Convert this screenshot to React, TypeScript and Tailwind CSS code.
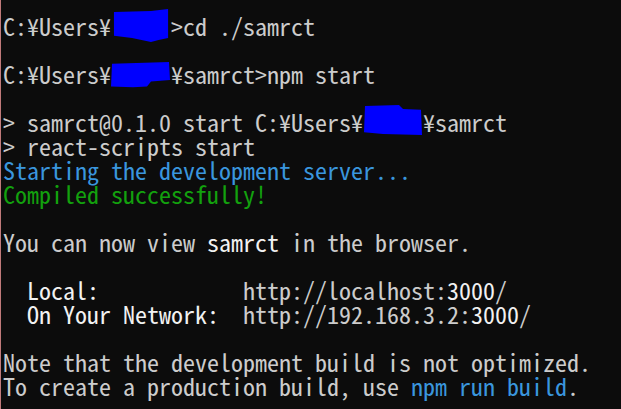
const W = 'text-[#f2f2f2]';

function Blot({ className, d }: { className: string; d: string }) {
  return (
    <svg className={`absolute ${className}`} viewBox="0 0 60 32" preserveAspectRatio="none">
      <path d={d} fill="#0000ff" />
    </svg>
  );
}

export default function App() {
  return (
    <div className="relative w-[621px] h-[409px] overflow-hidden bg-[#0c0c0c] border-l border-[#c07a7a]">
      <div
        className="pt-[14px] pl-[2px] whitespace-pre text-[24px] leading-[24px] text-[#cccccc]"
        style={{ fontFamily: '"Noto Sans Mono CJK JP", "Liberation Mono", monospace' }}
      >
        <div>C:¥Users¥     &gt;cd ./samrct</div>
        <div>&nbsp;</div>
        <div>C:¥Users¥     ¥samrct&gt;npm start</div>
        <div>&nbsp;</div>
        <div>&gt; samrct@0.1.0 start C:¥Users¥     ¥samrct</div>
        <div>&gt; react-scripts start</div>
        <div className="text-[#3a96dd]">Starting the development server...</div>
        <div className="text-[#13a10e]">Compiled successfully!</div>
        <div>&nbsp;</div>
        <div>
          You can now view <span className={W}>samrct</span> in the browser.
        </div>
        <div>&nbsp;</div>
        <div>
          {'  '}<span className={W}>Local:</span>{'            '}http://localhost:<span className={W}>3000</span>/
        </div>
        <div>
          {'  '}<span className={W}>On Your Network:</span>{'  '}http://192.168.3.2:<span className={W}>3000</span>/
        </div>
        <div>&nbsp;</div>
        <div>Note that the development build is not optimized.</div>
        <div>
          To create a production build, use <span className="text-[#3a96dd]">npm run build</span>.
        </div>
      </div>

      {/* redacted user name */}
      <Blot className="left-[112px] top-[9px] w-[57px] h-[33px]" d="M1 3 L40 2 L58 0 L58 28 L48 30 L40 32 L20 28 L1 26 Z" />
      <Blot className="left-[110px] top-[62px] w-[60px] h-[26px]" d="M1 2 L58 0 L59 22 L40 24 L36 30 L22 31 L0 30 Z" />
      <Blot className="left-[362px] top-[105px] w-[60px] h-[31px]" d="M2 1 L36 0 L40 4 L58 5 L59 31 L20 30 L1 28 Z" />
    </div>
  );
}
